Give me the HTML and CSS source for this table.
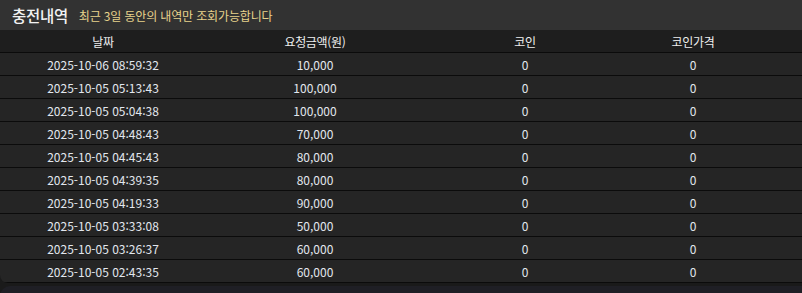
FILE: index.html
```html
<!DOCTYPE html>
<html lang="ko">
<head>
<meta charset="utf-8">
<link rel="stylesheet" href="styles.css">
</head>
<body>
<div class="panel">
  <div class="titlebar">
    <span class="title">충전내역</span>
    <span class="subtitle">최근 3일 동안의 내역만 조회가능합니다</span>
  </div>
  <div class="table">
    <div class="row head"><div>날짜</div><div>요청금액(원)</div><div>코인</div><div class="c4">코인가격</div></div>
    <div class="row"><div>2025-10-06 08:59:32</div><div>10,000</div><div>0</div><div class="c4">0</div></div>
    <div class="row"><div>2025-10-05 05:13:43</div><div>100,000</div><div>0</div><div class="c4">0</div></div>
    <div class="row"><div>2025-10-05 05:04:38</div><div>100,000</div><div>0</div><div class="c4">0</div></div>
    <div class="row"><div>2025-10-05 04:48:43</div><div>70,000</div><div>0</div><div class="c4">0</div></div>
    <div class="row"><div>2025-10-05 04:45:43</div><div>80,000</div><div>0</div><div class="c4">0</div></div>
    <div class="row"><div>2025-10-05 04:39:35</div><div>80,000</div><div>0</div><div class="c4">0</div></div>
    <div class="row"><div>2025-10-05 04:19:33</div><div>90,000</div><div>0</div><div class="c4">0</div></div>
    <div class="row"><div>2025-10-05 03:33:08</div><div>50,000</div><div>0</div><div class="c4">0</div></div>
    <div class="row"><div>2025-10-05 03:26:37</div><div>60,000</div><div>0</div><div class="c4">0</div></div>
    <div class="row"><div>2025-10-05 02:43:35</div><div>60,000</div><div>0</div><div class="c4">0</div></div>
  </div>
</div>
<div class="next-panel"></div>
</body>
</html>
```
FILE: styles.css
```css
html, body {
  margin: 0;
  padding: 0;
}
body {
  background: #1a1a1a;
  font-family: "Noto Sans CJK KR", "Noto Sans", sans-serif;
  color: #e6e6e6;
  width: 802px;
  height: 293px;
  overflow: hidden;
}
.panel {
  background: #252525;
  border-radius: 0 0 0 8px;
  overflow: hidden;
}
.titlebar {
  height: 30px;
  background: #323232;
  display: flex;
  align-items: center;
  padding-left: 12px;
  box-sizing: border-box;
}
.title {
  font-size: 15.5px;
  font-weight: 500;
  color: #f2f2f2;
  letter-spacing: -0.3px;
  margin-right: 11px;
}
.subtitle {
  font-size: 12px;
  color: #e8d38c;
  letter-spacing: -0.15px;
  padding-top: 1px;
}
.row {
  display: grid;
  grid-template-columns: 206px 218px 202px 1fr;
  height: 22px;
  border-bottom: 1px solid #0b0b0b;
  align-items: center;
  font-size: 12px;
  text-align: center;
  color: #e2e7ee;
}
.row.head {
  background: #1e1e1e;
  color: #eeeeee;
  letter-spacing: -0.3px;
}
.c4 {
  padding-right: 42px;
}
.next-panel {
  margin-top: 3px;
  height: 20px;
  background: #1f1f25;
  border-radius: 10px 0 0 0;
}
```
